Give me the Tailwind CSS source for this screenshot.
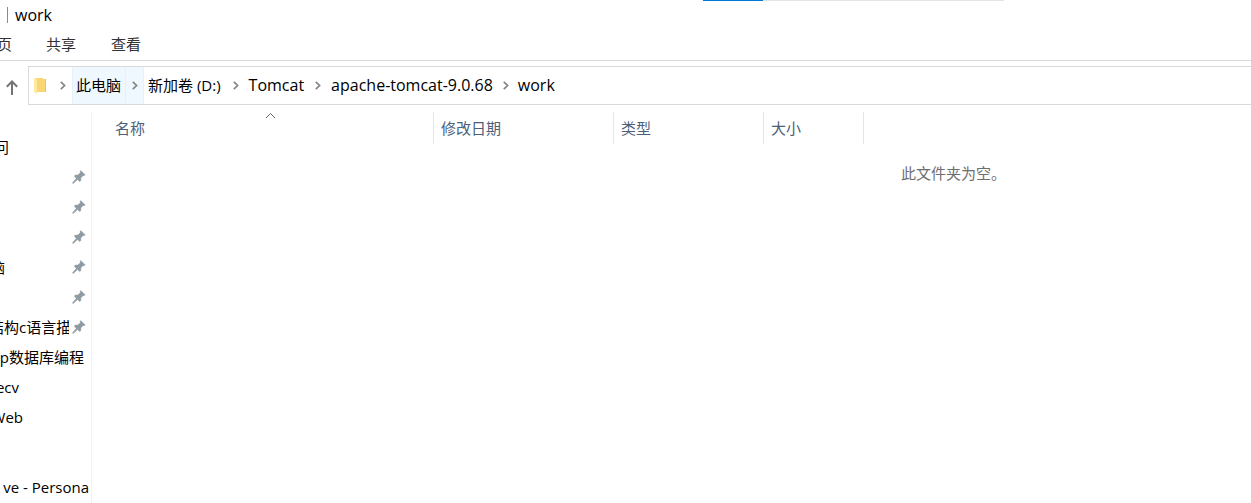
<!DOCTYPE html>
<html lang="zh-CN">
<head>
<meta charset="utf-8">
<title>work</title>
<script src="https://cdn.jsdelivr.net/npm/@tailwindcss/browser@4"></script>
</head>
<body class="flex min-h-screen flex-col overflow-x-hidden bg-white font-['Open_Sans','Noto_Sans_CJK_SC',sans-serif] text-[15px] leading-[30px] text-black">
<svg class="hidden" aria-hidden="true">
  <symbol id="pin" viewBox="0 0 14 14"><path fill="#8f9ba3" stroke="#8f9ba3" stroke-width=".5" d="M8.8.6 13.2 5l-1.3.7-.8-.2-2.300 2.400.1 2.600-1.200 1.100-2.200-2.100L1.500 13.200.6 13.300.8 12.400 4.300 8.500 2.300 6.100 3.400 5l2.500.1 2.400-2.300-.2-1z"/></symbol>
  <symbol id="chevron" viewBox="0 0 6 9"><path fill="none" stroke="#858585" stroke-width="1.700" d="M.8.8 4.600 4.500.8 8.200"/></symbol>
</svg>

<header class="relative flex h-[30px] items-center">
  <span class="ml-[7px] h-4 w-px bg-[#8a8a8a]"></span>
  <h1 class="ml-[7px] text-base leading-7">work</h1>
  <div class="absolute top-0 left-[703px] flex h-px w-[301px] bg-[#e5e5e5]"><span class="w-[60px] bg-[#0078d7]"></span></div>
</header>

<nav class="flex h-[31px] border-b border-[#dadbdc] leading-7 whitespace-nowrap text-[#333]">
  <button class="flex w-3 items-center justify-end overflow-hidden pb-[2px]">主页</button>
  <button class="ml-[34px] pb-[2px]">共享</button>
  <button class="ml-[35px] pb-[2px]">查看</button>
</nav>

<div class="mt-[5px] flex h-[39px]">
  <button class="flex w-7 items-center pl-[6px]" aria-label="上移">
    <svg class="mt-1 h-[15px] w-3" viewBox="0 0 12 15" fill="none" stroke="#747474" stroke-width="2"><path d="M6 15V1.500M.8 6.700 6 1.500l5.200 5.200"/></svg>
  </button>
  <div class="flex min-w-0 flex-1 items-center border border-r-0 border-[#d9d9d9] whitespace-nowrap">
    <svg class="ml-[5px] h-[17px] w-3" viewBox="0 0 12 17"><path fill="#f9d671" d="M0 1h9v1h3v13H3z"/><path fill="#ffe8a0" d="M0 1l3 1v15l-3-2z"/><path fill="#eec257" d="M11 2h1v13h-1z"/></svg>
    <svg class="ml-[14px] h-[9px] w-[6px]"><use href="#chevron"/></svg>
    <div class="ml-[6px] flex h-full items-center bg-[#f0f8ff]">
      <button class="h-full w-[54px] border-x border-[#e2f1fc] pr-px pb-[2px] text-center">此电脑</button>
      <button class="flex h-full w-[18px] items-center justify-center border-r border-[#e2f1fc]" aria-label="展开"><svg class="h-[9px] w-[6px]"><use href="#chevron"/></svg></button>
    </div>
    <button class="ml-1 pb-[2px]">新加卷 (D:)</button>
    <svg class="ml-3 h-[9px] w-[6px]"><use href="#chevron"/></svg>
    <button class="ml-[10px] pb-[2px] text-base">Tomcat</button>
    <svg class="ml-[11px] h-[9px] w-[6px]"><use href="#chevron"/></svg>
    <button class="ml-[10px] pb-[2px] text-base">apache-tomcat-9.0.68</button>
    <svg class="ml-[10px] h-[9px] w-[6px]"><use href="#chevron"/></svg>
    <button class="ml-[9px] pb-[2px] text-base">work</button>
  </div>
</div>

<div class="flex flex-1 pt-[7px]">
  <aside class="w-[92px] shrink-0 border-r border-[#f2f2f2] pt-5">
    <ul class="whitespace-nowrap">
      <li class="flex h-[30px]"><span class="flex w-[9px] justify-end overflow-hidden">访问</span></li>
      <li class="flex h-[30px] items-center justify-end pr-[5px]"><svg class="h-[14px] w-[14px]"><use href="#pin"/></svg></li>
      <li class="flex h-[30px] items-center justify-end pr-[5px]"><svg class="h-[14px] w-[14px]"><use href="#pin"/></svg></li>
      <li class="flex h-[30px] items-center justify-end pr-[5px]"><svg class="h-[14px] w-[14px]"><use href="#pin"/></svg></li>
      <li class="flex h-[30px] items-center justify-between pr-[5px]"><span class="flex w-[5px] justify-end overflow-hidden">电脑</span><svg class="h-[14px] w-[14px]"><use href="#pin"/></svg></li>
      <li class="flex h-[30px] items-center justify-end pr-[5px]"><svg class="h-[14px] w-[14px]"><use href="#pin"/></svg></li>
      <li class="flex h-[30px] items-center justify-between pr-[5px]"><span class="w-[69px] overflow-hidden"><span class="-ml-[11px]">结构c语言描</span></span><svg class="h-[14px] w-[14px]"><use href="#pin"/></svg></li>
      <li class="flex h-[30px]"><span class="flex w-[84px] justify-end overflow-hidden">p数据库编程</span></li>
      <li class="flex h-[30px]"><span class="flex w-[19px] justify-end overflow-hidden">Recv</span></li>
      <li class="flex h-[30px]"><span class="flex w-[23px] justify-end overflow-hidden">Web</span></li>
      <li class="mt-10 flex h-[30px]"><span class="flex w-[89px] justify-end overflow-hidden">ve - Persona</span></li>
    </ul>
  </aside>
  <main class="min-w-0 flex-1">
    <table class="w-[772px] table-fixed border-separate border-spacing-0 text-left text-[#4c607a]">
      <thead>
        <tr class="h-8">
          <th class="relative w-[342px] border-r border-[#e5e5e5] p-0 pl-[23px] font-normal">名称
            <svg class="absolute top-0 left-[173px] h-[7px] w-[11px]" viewBox="0 0 11 7" fill="none" stroke="#666"><path d="M1 6 5.500 1.500 10 6"/></svg>
          </th>
          <th class="w-[180px] border-r border-[#e5e5e5] p-0 pl-[7px] font-normal">修改日期</th>
          <th class="w-[150px] border-r border-[#e5e5e5] p-0 pl-[7px] font-normal">类型</th>
          <th class="w-[100px] border-r border-[#e5e5e5] p-0 pl-[7px] font-normal">大小</th>
        </tr>
      </thead>
    </table>
    <p class="mt-[14px] pl-[809px] whitespace-nowrap text-[#6d6d6d]">此文件夹为空。</p>
  </main>
</div>
</body>
</html>
